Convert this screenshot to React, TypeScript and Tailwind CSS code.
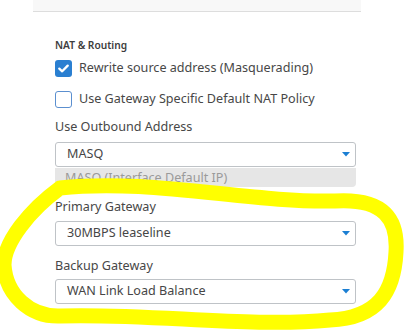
import React from 'react';

const font = { fontFamily: '"Noto Sans", "Open Sans", sans-serif' };

const Caret = () => (
  <svg width="8" height="5" viewBox="0 0 8 5" className="shrink-0">
    <path d="M0 0 H8 L4 4.5 Z" fill="#1b7fd3" />
  </svg>
);

const Select = ({ value, className = '' }: { value: string; className?: string }) => (
  <div
    className={`w-[301px] h-[25px] border border-[#bfc3c7] rounded-[3px] bg-white flex items-center justify-between pl-[11px] pr-[5px] text-[12.6px] text-[#464646] ${className}`}
  >
    <span>{value}</span>
    <Caret />
  </div>
);

const Check = ({ checked, label }: { checked?: boolean; label: string }) => (
  <div className="flex items-center gap-[7px] h-[17px]">
    {checked ? (
      <div className="w-[17px] h-[17px] rounded-[3px] bg-[#2a7fd1] flex items-center justify-center">
        <svg width="11" height="9" viewBox="0 0 11 9">
          <path d="M1.3 4.6 L4.2 7.3 L9.7 1.6" fill="none" stroke="white" strokeWidth="2.3" strokeLinecap="round" strokeLinejoin="round" />
        </svg>
      </div>
    ) : (
      <div className="w-[17px] h-[17px] rounded-[3px] border-[1.5px] border-[#5b8fcf] bg-white" />
    )}
    <span className="text-[12.6px] text-[#474747]">{label}</span>
  </div>
);

export default function App() {
  return (
    <div className="relative w-[404px] h-[330px] bg-white overflow-hidden" style={font}>
      <div className="ml-[33px] w-[328px] h-[12px] bg-[#f8f8f8] border-b border-[#dddddd]" />

      <div className="pl-[55px] flex flex-col">
        <div className="mt-[26px] h-[15px] text-[10.2px] font-semibold text-[#3d3d3d] leading-[15px]">NAT &amp; Routing</div>
        <div className="mt-[7px]">
          <Check checked label="Rewrite source address (Masquerading)" />
        </div>
        <div className="mt-[14px]">
          <Check label="Use Gateway Specific Default NAT Policy" />
        </div>

        <div className="mt-[10px] h-[18px] leading-[18px] text-[12.6px] text-[#474747]">Use Outbound Address</div>
        <Select value="MASQ" className="mt-[6px]" />
        <div className="mt-[1px] w-[301px] h-[19px] bg-[#e6e6e6] rounded-b-[4px] pl-[10px] text-[12.6px] leading-[19px] text-[#9a9a9a]">
          MASQ (Interface Default IP)
        </div>

        <div className="mt-[11px] h-[18px] leading-[18px] text-[12.6px] text-[#474747]">Primary Gateway</div>
        <Select value="30MBPS leaseline" className="mt-[5px]" />

        <div className="mt-[11px] h-[18px] leading-[18px] text-[12.6px] text-[#474747]">Backup Gateway</div>
        <Select value="WAN Link Load Balance" className="mt-[4px]" />
      </div>

      {/* hand-drawn highlight */}
      <svg className="absolute inset-0 pointer-events-none" width="404" height="330" viewBox="0 0 404 330">
        <path
          d="M60 188 C 150 178, 250 203, 335 201 C 385 198, 398 220, 396 252 C 394 292, 378 318, 330 320 C 250 328, 150 313, 60 316 C 30 317, 6 295, 4 265 C 4 242, 30 210, 60 188"
          fill="none"
          stroke="#ffff00"
          strokeWidth="15"
          strokeLinecap="round"
          strokeLinejoin="round"
        />
      </svg>
    </div>
  );
}
